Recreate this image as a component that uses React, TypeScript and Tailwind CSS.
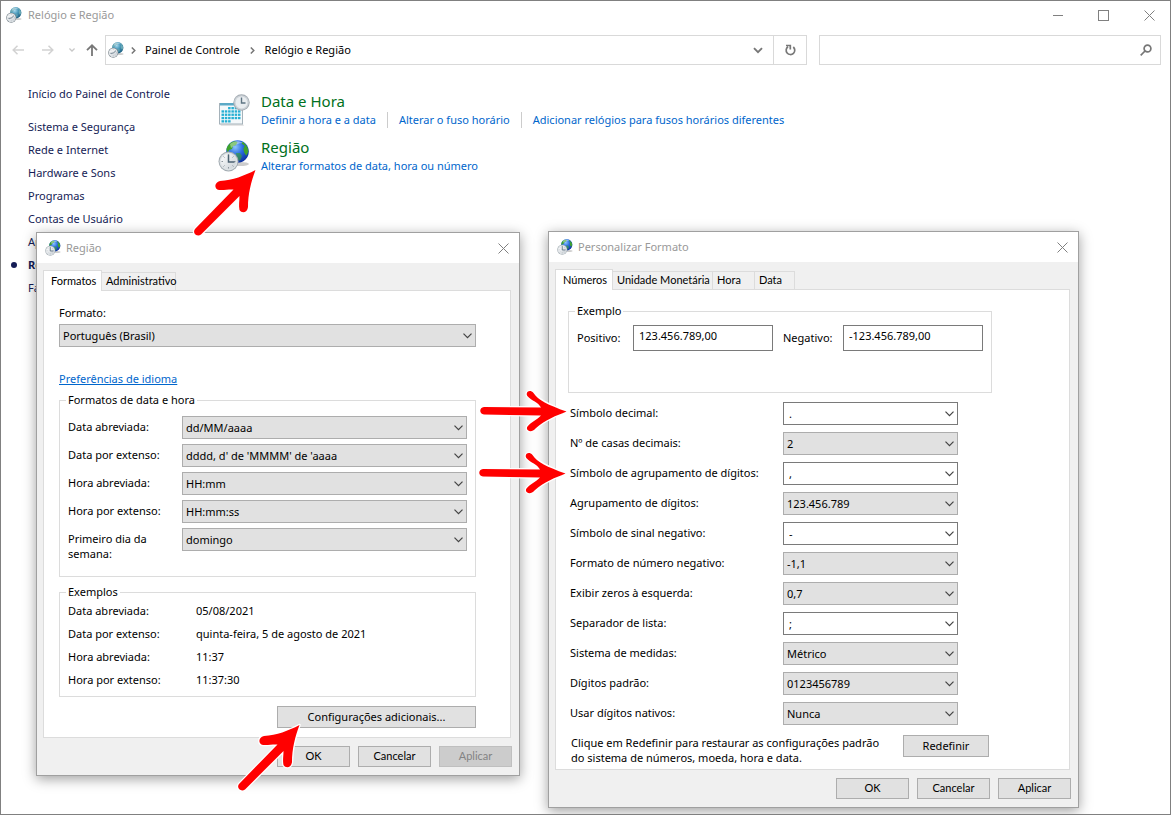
import React, { useId } from 'react';
import clsx from 'clsx';

// --- Types ---
interface TabItem {
  label: string;
  width: string;
}

// --- Data ---
const sidebarItems = [
  'Sistema e Segurança',
  'Rede e Internet',
  'Hardware e Sons',
  'Programas',
  'Contas de Usuário',
  'Aparência e Personalização',
  'Relógio e Região',
  'Facilidade de Acesso',
];

const regionTabs: TabItem[] = [
  { label: 'Formatos', width: 'w-[59px]' },
  { label: 'Administrativo', width: 'w-[74px]' },
];

const customizeTabs: TabItem[] = [
  { label: 'Números', width: 'w-[58px]' },
  { label: 'Unidade Monetária', width: 'w-[100px]' },
  { label: 'Hora', width: 'w-[42px]' },
  { label: 'Data', width: 'w-[40px]' },
];

const dateFormats = [
  { label: 'Data abreviada:', value: 'dd/MM/aaaa' },
  { label: 'Data por extenso:', value: "dddd, d' de 'MMMM' de 'aaaa" },
  { label: 'Hora abreviada:', value: 'HH:mm' },
  { label: 'Hora por extenso:', value: 'HH:mm:ss' },
  { label: 'Primeiro dia da semana:', value: 'domingo' },
];

const examples = [
  { label: 'Data abreviada:', value: '05/08/2021' },
  { label: 'Data por extenso:', value: 'quinta-feira, 5 de agosto de 2021' },
  { label: 'Hora abreviada:', value: '11:37' },
  { label: 'Hora por extenso:', value: '11:37:30' },
];

const numberSettings = [
  { label: 'Símbolo decimal:', value: '.', editable: true },
  { label: 'Nº de casas decimais:', value: '2' },
  { label: 'Símbolo de agrupamento de dígitos:', value: ',', editable: true },
  { label: 'Agrupamento de dígitos:', value: '123.456.789' },
  { label: 'Símbolo de sinal negativo:', value: '-', editable: true },
  { label: 'Formato de número negativo:', value: '-1,1' },
  { label: 'Exibir zeros à esquerda:', value: '0,7' },
  { label: 'Separador de lista:', value: ';', editable: true },
  { label: 'Sistema de medidas:', value: 'Métrico' },
  { label: 'Dígitos padrão:', value: '0123456789' },
  { label: 'Usar dígitos nativos:', value: 'Nunca' },
];

// --- Icons ---
const RegionIcon = ({ size = 16, muted = false }: { size?: number; muted?: boolean }) => {
  const id = useId();
  return (
    <svg width={size} height={size} viewBox="0 0 32 32" className="shrink-0" aria-hidden="true">
      <defs>
        <radialGradient id={`${id}g`} cx="0.4" cy="0.3" r="0.75">
          <stop offset="0" stopColor={muted ? '#a8d8ec' : '#8fc4ff'} />
          <stop offset="0.45" stopColor={muted ? '#4597ba' : '#2c6fe0'} />
          <stop offset="1" stopColor={muted ? '#1b5a7c' : '#0a2a9a'} />
        </radialGradient>
        <linearGradient id={`${id}c`} x1="0" y1="0" x2="1" y2="1">
          <stop offset="0" stopColor="#ffffff" />
          <stop offset="1" stopColor="#c9d0d6" />
        </linearGradient>
      </defs>
      <ellipse cx="22" cy="24" rx="9" ry="2" fill="#000" opacity="0.2" />
      <circle cx="19.5" cy="11.5" r="11.3" fill={`url(#${id}g)`} />
      <g fill={muted ? '#6aa9b5' : '#3fa32a'}>
        <path d="M8.500 10c0-4 4-8 8-8.700l3 .7-1.500 3-3 1-1 3-3 1-1 3z" />
        <path d="M24 1.800c4 2 6.500 6 6.300 10l-2 4-2-3-1-4 1.500-3-3-2z" />
        <path d="M18 13l4 0 2 3-2 5-3-2z" opacity="0.6" />
      </g>
      <path d="M12 4c3-3 9-4 13-1-4 0-9 2-12 5z" fill="#fff" opacity="0.4" />
      <circle cx="10.500" cy="21.500" r="10" fill={muted ? '#6f7a82' : '#a3acb2'} />
      <circle cx="10.500" cy="21.500" r="9" fill="#dde2e5" />
      <circle cx="10.500" cy="21.500" r="7.600" fill={`url(#${id}c)`} />
      <path d="M10.500 14.500v1.500M10.500 27v1.500M3.500 21.500h1.500M16 21.500h1.500M5.500 16.500l1 1M15.500 16.500l-1 1M5.500 26.500l1-1M15.500 26.500l-1-1" stroke="#8d979e" />
      <path d={muted ? 'M5 23l5.500-1 5-4' : 'M10.500 14.500v7.500h6'} fill="none" stroke="#4c6272" strokeWidth="1.500" />
    </svg>
  );
};

const CalendarIcon = () => (
  <svg width="32" height="32" viewBox="0 0 32 32" className="shrink-0" aria-hidden="true">
    <path d="M2 30.500h23l1 1H3z" fill="#000" opacity="0.2" />
    <rect x="1.500" y="9.500" width="23" height="20.500" fill="#f4f8fa" stroke="#a5b2ba" />
    <rect x="2" y="9" width="22" height="2.500" fill="#5ba9c6" />
    <g fill="#27b0d3">
      {[0, 1, 2, 3, 4].map(row =>
        [0, 1, 2, 3, 4, 5].map(col =>
          (row === 0 && col < 2) || (row === 4 && col > 2) ? null : (
            <rect key={`${row}-${col}`} x={3.5 + col * 3.3} y={13 + row * 3.3} width="2.500" height="2.300" />
          ),
        ),
      )}
    </g>
    <circle cx="23.500" cy="8.500" r="8.200" fill="#a3abb2" />
    <circle cx="23.500" cy="8.500" r="7.300" fill="#ccd2d7" />
    <circle cx="23.500" cy="8.500" r="5.900" fill="#e9edf0" />
    <path d="M23.500 3.500v5.500h4" fill="none" stroke="#5e7482" strokeWidth="1.400" />
  </svg>
);

const CloseIcon = () => (
  <svg width="11" height="11" viewBox="0 0 11 11" fill="none" stroke="#808080" aria-hidden="true">
    <path d="M.5.5l10 10M10.500.5l-10 10" />
  </svg>
);

const Chevron = ({ className }: { className?: string }) => (
  <svg width="9" height="6" viewBox="0 0 9 6" fill="none" stroke="currentColor" className={className} aria-hidden="true">
    <path d="M.5.7l4 4 4-4" strokeWidth="1.200" />
  </svg>
);

const CrumbArrow = () => (
  <svg width="5" height="7" viewBox="0 0 5 7" fill="none" stroke="#777" strokeWidth="1.500" aria-hidden="true">
    <path d="M.8.5l3 3-3 3" />
  </svg>
);

// Red marker arrows drawn on top of the windows
const RightArrow = ({ className }: { className: string }) => (
  <svg width="87" height="42" viewBox="0 0 87 42" className={clsx('pointer-events-none absolute z-30 overflow-visible', className)} aria-hidden="true">
    <path
      d="M4 16L61 16.500C58 11 52 10 47.300 5C45 1 50-2 53.500 2C58 9 68 14 86.500 20.500C76 25 66 28 55.500 37.500C51 43 45 39 47.500 35.500C51 31 57 29 61 24.500L4 23.500C-1 23-1 16.500 4 16Z"
      fill="#f00" stroke="#fff" strokeWidth="2.500" strokeLinejoin="round" paintOrder="stroke"
    />
  </svg>
);

const DiagonalArrow = ({ className }: { className: string }) => (
  <svg width="70" height="74" viewBox="0 0 70 74" className={clsx('pointer-events-none absolute z-30 overflow-visible', className)} aria-hidden="true">
    <path
      d="M65.500 5C54 11 43 15 30 16C24 17.500 24 24 29 25C34 25.500 39 24 43.500 24.500L5 64C2 68 7 72.500 11 69.500L49.500 31C49.500 36 48.500 40 49.500 45C52 49 57.500 47.500 58 42C58 29 61 17 65.500 5Z"
      fill="#f00" stroke="#fff" strokeWidth="2.500" strokeLinejoin="round" paintOrder="stroke"
    />
  </svg>
);

// --- Controls ---
const Combo: React.FC<{ id: string; value: string; editable?: boolean; className?: string }> = ({ id, value, editable, className }) => (
  <div className={clsx('relative', className)}>
    <select
      id={id}
      defaultValue={value}
      className={clsx(
        'block h-[23px] w-full appearance-none rounded-none border pr-5 pt-px text-[11px] text-black outline-none',
        editable ? 'border-[#7a7a7a] bg-white pl-[5px]' : 'border-[#adadad] bg-[#e1e1e1] pl-[3px]',
      )}
    >
      <option>{value}</option>
    </select>
    <Chevron className="pointer-events-none absolute right-1 top-[9px] text-[#444]" />
  </div>
);

const PushButton: React.FC<{ children: React.ReactNode; className: string; disabled?: boolean }> = ({ children, className, disabled }) => (
  <button
    disabled={disabled}
    className={clsx(
      'flex items-center justify-center border',
      disabled ? 'border-[#bfbfbf] bg-[#cccccc] text-[#838383]' : 'border-[#adadad] bg-[#e1e1e1] text-black',
      className,
    )}
  >
    {children}
  </button>
);

const Group: React.FC<{ title: string; className: string; children: React.ReactNode }> = ({ title, className, children }) => (
  <fieldset className={clsx('border border-[#dcdcdc]', className)}>
    <legend className="-ml-[2px] px-[2px] leading-4">{title}</legend>
    {children}
  </fieldset>
);

const DialogWindow: React.FC<{
  title: string;
  tabs: TabItem[];
  className: string;
  applyDisabled?: boolean;
  children: React.ReactNode;
}> = ({ title, tabs, className, applyDisabled, children }) => (
  <section
    aria-label={title}
    className={clsx('absolute border border-[#a0a0a0] bg-[#f0f0f0] shadow-[0_3px_12px_rgba(0,0,0,0.38)]', className)}
  >
    <header className="flex h-[30px] items-center gap-[5px] bg-white pl-2 pr-[10px]">
      <RegionIcon />
      <h2 className="flex-1 text-[#999]">{title}</h2>
      <button aria-label="Fechar"><CloseIcon /></button>
    </header>

    <div className="pl-[6px] pr-2">
      <div role="tablist" className="flex h-[27px] items-end font-[Lato,sans-serif]">
        {tabs.map((tab, i) => (
          <button
            key={tab.label}
            role="tab"
            aria-selected={i === 0}
            className={clsx(
              'whitespace-nowrap border-[#dcdcdc] text-left text-black',
              i === 0 ? 'relative z-10 -mb-px h-[21px] border border-b-0 bg-white pl-[7px]' : 'h-[18px] border-r border-t pl-1',
              tab.width,
            )}
          >
            {tab.label}
          </button>
        ))}
      </div>
      <div role="tabpanel" className="border border-[#dcdcdc] bg-white">{children}</div>
    </div>

    <footer className="flex justify-end gap-2 py-2 pr-[7px] font-[Lato,sans-serif]">
      <PushButton className="h-[21px] w-[73px]">OK</PushButton>
      <PushButton className="h-[21px] w-[73px]">Cancelar</PushButton>
      <PushButton className="h-[21px] w-[73px]" disabled={applyDisabled}>Aplicar</PushButton>
    </footer>
  </section>
);

// --- Dialogs ---
const RegionDialog = () => (
  <DialogWindow title="Região" tabs={regionTabs} className="left-[35px] top-[231px] z-10 w-[484px]" applyDisabled>
    <div className="pb-[9px] pl-[15px] pr-[34px] pt-[14px]">
      <label htmlFor="formato" className="block leading-4">Formato:</label>
      <Combo id="formato" value="Português (Brasil)" className="mt-[3px]" />
      <a href="#idioma" className="mt-6 block leading-4 text-[#0066cc] underline">Preferências de idioma</a>

      <Group title="Formatos de data e hora" className="mt-[5px] px-2 pb-[15px] pt-2">
        <div className="flex flex-col gap-[5px]">
          {dateFormats.map((row, i) => (
            <div key={row.label} className="flex items-start">
              <label htmlFor={`fmt-${i}`} className="w-[114px] pr-3 pt-[3px] leading-[15px]">{row.label}</label>
              <Combo id={`fmt-${i}`} value={row.value} className="flex-1" />
            </div>
          ))}
        </div>
      </Group>

      <Group title="Exemplos" className="mt-[7px] px-2 pb-[5px]">
        <dl className="-mt-px leading-[23px]">
          {examples.map(row => (
            <div key={row.label} className="flex">
              <dt className="w-32">{row.label}</dt>
              <dd>{row.value}</dd>
            </div>
          ))}
        </dl>
      </Group>

      <PushButton className="ml-auto mt-[9px] h-[22px] w-[199px]">Configurações adicionais...</PushButton>
    </div>
  </DialogWindow>
);

const CustomizeDialog = () => (
  <DialogWindow title="Personalizar Formato" tabs={customizeTabs} className="left-[547px] top-[230px] z-20 w-[531px]">
    <div className="pb-1 pl-3 pr-[77px] pt-[13px]">
      <Group title="Exemplo" className="px-2 pb-[41px] pt-[6px]">
        <div className="flex items-center">
          <label htmlFor="positivo" className="w-14">Positivo:</label>
          <input id="positivo" readOnly defaultValue="123.456.789,00" className="h-[26px] w-[140px] border border-[#7a7a7a] px-[5px] pb-[6px] outline-none" />
          <label htmlFor="negativo" className="ml-[10px] w-[60px]">Negativo:</label>
          <input id="negativo" readOnly defaultValue="-123.456.789,00" className="h-[26px] w-[140px] border border-[#7a7a7a] px-[5px] pb-[6px] outline-none" />
        </div>
      </Group>

      <div className="mt-[9px] flex flex-col gap-[7px] pl-[2px]">
        {numberSettings.map((row, i) => (
          <div key={row.label} className="flex items-center">
            <label htmlFor={`num-${i}`} className="w-[213px] whitespace-nowrap">{row.label}</label>
            <Combo id={`num-${i}`} value={row.value} editable={row.editable} className="w-[175px]" />
          </div>
        ))}
      </div>

      <div className="mt-[10px] flex items-start justify-between pl-[3px] pr-[3px]">
        <p className="leading-[15px]">
          Clique em Redefinir para restaurar as configurações padrão
          <br />
          do sistema de números, moeda, hora e data.
        </p>
        <PushButton className="h-[22px] w-[86px] shrink-0">Redefinir</PushButton>
      </div>
    </div>
  </DialogWindow>
);

// --- Main window ---
const Toolbar = () => (
  <div className="flex h-[30px] items-center pr-[9px]">
    <div className="flex w-[104px] shrink-0 items-center pl-[11px]">
      <button aria-label="Voltar" className="text-[#d2d2d2]">
        <svg width="12" height="10" viewBox="0 0 12 10" fill="none" stroke="currentColor" strokeWidth="1.500"><path d="M12 5H1M5.500.8L1.200 5l4.300 4.200" /></svg>
      </button>
      <button aria-label="Avançar" className="ml-[18px] text-[#d2d2d2]">
        <svg width="12" height="10" viewBox="0 0 12 10" fill="none" stroke="currentColor" strokeWidth="1.500"><path d="M0 5h11M6.500.8L10.800 5 6.500 9.200" /></svg>
      </button>
      <button aria-label="Locais recentes" className="ml-[15px] text-[#c8c8c8]">
        <svg width="6" height="4" viewBox="0 0 6 4" fill="none" stroke="currentColor" strokeWidth="1.300"><path d="M.4.5L3 3 5.600.5" /></svg>
      </button>
      <button aria-label="Acima" className="ml-[11px] text-[#777]">
        <svg width="12" height="12" viewBox="0 0 12 12" fill="none" stroke="currentColor" strokeWidth="1.800"><path d="M6 12V1.500M1 6.200L6 1.300l5 4.900" /></svg>
      </button>
    </div>

    <div className="flex h-full flex-1 items-center border border-[#d9d9d9]">
      <nav aria-label="Endereço" className="flex flex-1 items-center pl-[2px]">
        <RegionIcon muted />
        <span className="ml-[7px] mr-[9px]"><CrumbArrow /></span>
        <a href="#painel">Painel de Controle</a>
        <span className="mx-[10px]"><CrumbArrow /></span>
        <a href="#relogio">Relógio e Região</a>
      </nav>
      <button aria-label="Locais anteriores" className="mr-[10px] text-[#777]">
        <svg width="10" height="7" viewBox="0 0 10 7" fill="none" stroke="currentColor" strokeWidth="1.900"><path d="M1 1.200l4 4 4-4" /></svg>
      </button>
      <button aria-label="Atualizar" className="flex h-full w-[33px] items-center justify-center border-l border-[#d9d9d9] text-[#777]">
        <svg width="11" height="12" viewBox="0 0 11 12" fill="none" stroke="currentColor" strokeWidth="1.700">
          <path d="M8.300 3A4.300 4.300 0 1 1 3 2.700M1 1.500h4.300v4" />
        </svg>
      </button>
    </div>

    <div className="ml-3 flex h-full w-[342px] items-center border border-[#d9d9d9] pr-2">
      <input type="search" aria-label="Pesquisar" className="h-full min-w-0 flex-1 px-2 outline-none" />
      <svg width="12" height="12" viewBox="0 0 12 12" fill="none" stroke="#777" strokeWidth="1.700" aria-hidden="true">
        <circle cx="7.500" cy="4.500" r="3.400" />
        <path d="M5 7L.7 11.300" />
      </svg>
    </div>
  </div>
);

const linkClass = 'text-[#0066cc]';
const headingClass = 'mb-[2px] text-[15px] leading-[18px] text-[#007020]';

const App: React.FC = () => (
  <div className="relative min-h-screen overflow-hidden border border-[#808080] bg-white font-['Noto_Sans','Open_Sans',sans-serif] text-[11px] text-black">
    <header className="flex h-7 items-center gap-[6px] pl-[5px] pr-[15px]">
      <RegionIcon muted />
      <h1 className="flex-1 text-[#999]">Relógio e Região</h1>
      <div className="flex items-center gap-[35px]">
        <button aria-label="Minimizar" className="h-px w-[10px] bg-[#808080]" />
        <button aria-label="Maximizar" className="h-[11px] w-[11px] border border-[#808080]" />
        <button aria-label="Fechar"><CloseIcon /></button>
      </div>
    </header>

    <div className="pt-[6px]"><Toolbar /></div>

    <div className="flex">
      <nav className="w-[217px] shrink-0 pl-[27px] pt-[17px] leading-[23px] text-[#151c55]">
        <a href="#inicio">Início do Painel de Controle</a>
        <ul className="mt-[10px]">
          {sidebarItems.map(item => {
            const active = item === 'Relógio e Região';
            return (
              <li key={item} className={clsx('relative', active && 'font-bold')}>
                {active && <span className="absolute -left-[17px] top-[9px] h-[6px] w-[6px] rounded-full bg-[#151c55]" />}
                <a href="#categoria">{item}</a>
              </li>
            );
          })}
        </ul>
      </nav>

      <main className="flex flex-1 flex-col gap-[10px] pt-[27px]">
        <div className="flex gap-[11px]">
          <span className="pt-[2px]"><CalendarIcon /></span>
          <div>
            <h2 className={headingClass}>Data e Hora</h2>
            <div className="flex leading-4">
              <a href="#data" className={clsx(linkClass, 'pr-[11px]')}>Definir a hora e a data</a>
              <a href="#fuso" className={clsx(linkClass, 'border-l border-[#ccc] px-[11px]')}>Alterar o fuso horário</a>
              <a href="#relogios" className={clsx(linkClass, 'border-l border-[#ccc] px-[11px]')}>Adicionar relógios para fusos horários diferentes</a>
            </div>
          </div>
        </div>
        <div className="flex gap-[11px]">
          <span className="pt-[2px]"><RegionIcon size={32} /></span>
          <div>
            <h2 className={headingClass}>Região</h2>
            <a href="#formatos" className={clsx(linkClass, 'block leading-4')}>Alterar formatos de data, hora ou número</a>
          </div>
        </div>
      </main>
    </div>

    <RegionDialog />
    <CustomizeDialog />

    <DiagonalArrow className="left-[189px] top-[164px]" />
    <DiagonalArrow className="left-[233px] top-[719px]" />
    <RightArrow className="left-[479px] top-[390px]" />
    <RightArrow className="left-[478px] top-[452px]" />
  </div>
);

export default App;
